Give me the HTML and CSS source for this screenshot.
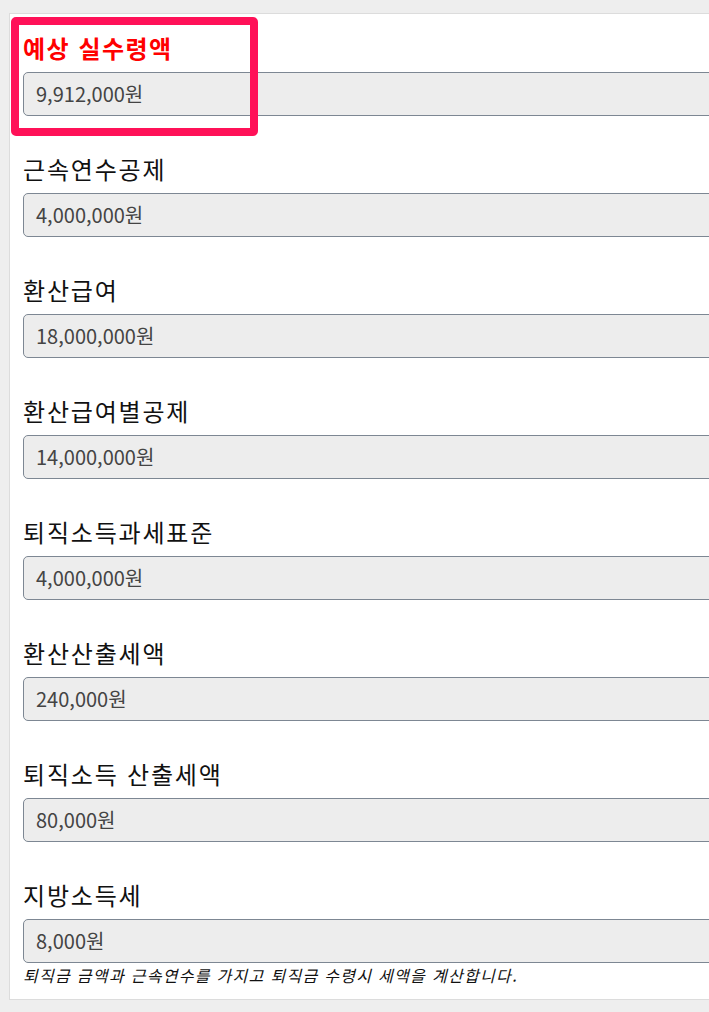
FILE: index.html
```html
<!DOCTYPE html>
<html lang="ko">
<head>
<meta charset="utf-8">
<link rel="stylesheet" href="styles.css">
</head>
<body>
<div class="page">
  <div class="card">
    <div class="group">
      <label class="label label-red">예상 실수령액</label>
      <div class="field">9,912,000원</div>
    </div>
    <div class="group">
      <label class="label">근속연수공제</label>
      <div class="field">4,000,000원</div>
    </div>
    <div class="group">
      <label class="label">환산급여</label>
      <div class="field">18,000,000원</div>
    </div>
    <div class="group">
      <label class="label">환산급여별공제</label>
      <div class="field">14,000,000원</div>
    </div>
    <div class="group">
      <label class="label">퇴직소득과세표준</label>
      <div class="field">4,000,000원</div>
    </div>
    <div class="group">
      <label class="label">환산산출세액</label>
      <div class="field">240,000원</div>
    </div>
    <div class="group">
      <label class="label">퇴직소득 산출세액</label>
      <div class="field">80,000원</div>
    </div>
    <div class="group group-last">
      <label class="label">지방소득세</label>
      <div class="field">8,000원</div>
      <p class="help">퇴직금 금액과 근속연수를 가지고 퇴직금 수령시 세액을 계산합니다.</p>
    </div>
    <div class="highlight"></div>
  </div>
</div>
</body>
</html>
```
FILE: styles.css
```css
html, body {
  margin: 0;
  padding: 0;
  background: #eeeeee;
  overflow: hidden;
  font-family: "Noto Sans CJK KR", "Noto Sans", sans-serif;
}
.page {
  padding: 13px 0 0 9px;
  width: 900px;
}
.card {
  position: relative;
  background: #ffffff;
  border: 1px solid #dcdcdc;
  padding: 16px 0 12px 13px;
}
.group {
  margin-bottom: 35px;
}
.group-last {
  margin-bottom: 0;
}
.label {
  display: block;
  font-size: 24px;
  line-height: 36px;
  letter-spacing: 1.8px;
  color: #111111;
  margin-bottom: 6px;
}
.label-red {
  color: #ff0000;
  font-weight: 700;
  letter-spacing: 1.5px;
}
.field {
  box-sizing: border-box;
  height: 44px;
  border: 1px solid #7d8793;
  border-radius: 5px;
  background: #ededed;
  color: #444444;
  font-size: 20px;
  line-height: 42px;
  padding: 0 12px;
}
.help {
  margin: 0;
  font-size: 16px;
  line-height: 24px;
  letter-spacing: 1.3px;
  font-style: italic;
  color: #111111;
}
.highlight {
  position: absolute;
  left: 1px;
  top: 3px;
  width: 231px;
  height: 103px;
  border: 8px solid #ff1158;
  border-radius: 5px;
}
```
